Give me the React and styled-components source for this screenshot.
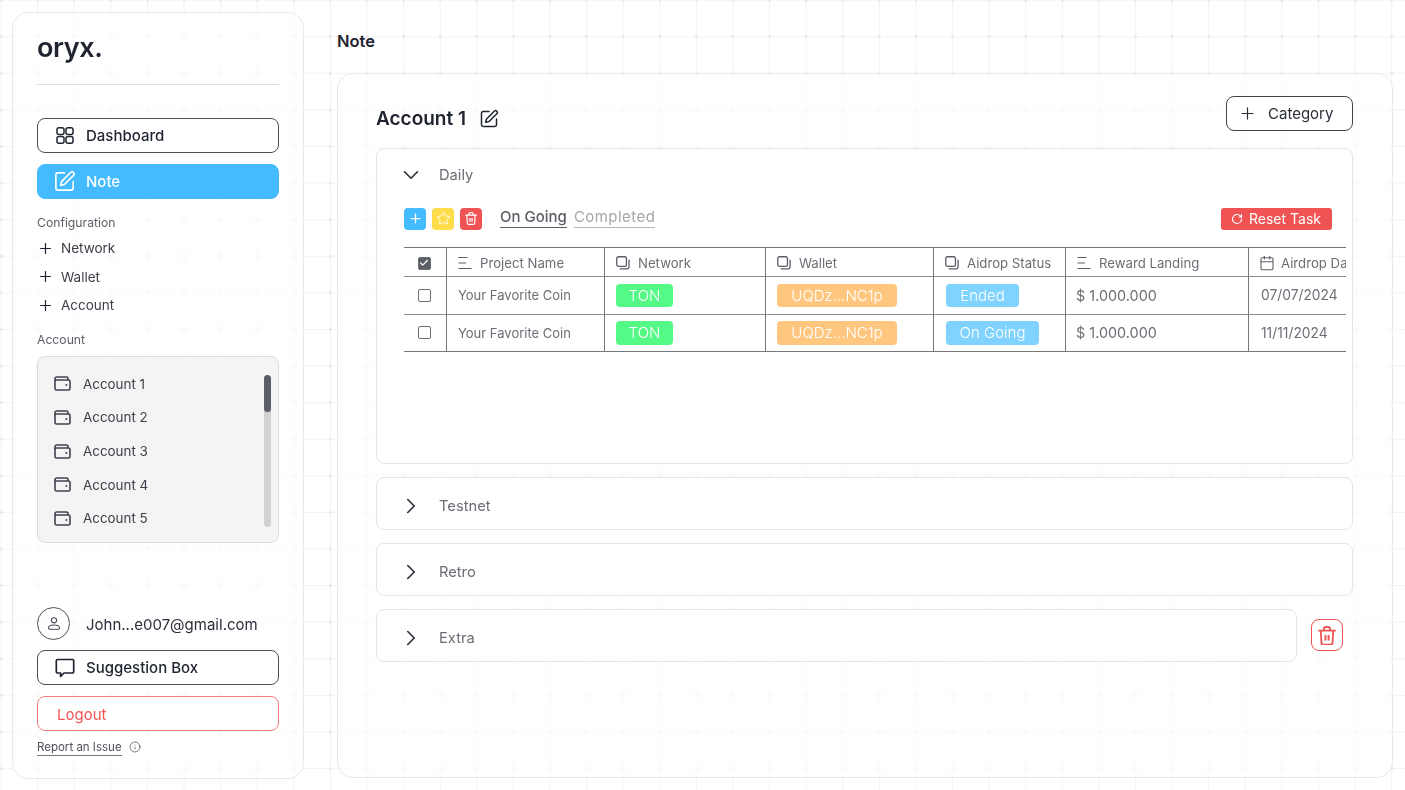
import React from 'react';
import styled, { createGlobalStyle } from 'styled-components';
import { ChevronDown, ChevronRight, Plus, Star, RotateCw, SquarePen, Info, Calendar, Check } from 'lucide-react';

const GlobalStyle = createGlobalStyle`
  html, body {
    margin: 0;
    height: 100%;
    overflow: hidden;
    background-color: #fff;
    background-image:
      radial-gradient(circle, #e6e6e8 1px, transparent 1.8px),
      linear-gradient(to right, #f3f3f4 1px, transparent 1px),
      linear-gradient(to bottom, #f3f3f4 1px, transparent 1px);
    background-size: 36.6px 36.6px;
    background-position: -17.2px -18.2px, 0.6px -0.4px, 0.6px -0.4px;
    font-family: Inter, "Liberation Sans", sans-serif;
    color: #1f2430;
  }
  * { box-sizing: border-box; }
`;

const Page = styled.div`
  width: 1405px;
  height: 790px;
  padding: 12px;
  display: flex;
  gap: 33px;
`;

const Sidebar = styled.aside`
  width: 292px;
  height: 767px;
  flex: none;
  padding: 20px 24px 0 24px;
  border: 1px solid #e9e9ea;
  border-radius: 16px;
  background: rgba(255, 255, 255, 0.55);
  backdrop-filter: blur(1px);
  display: flex;
  flex-direction: column;
`;

const Logo = styled.div`
  font-size: 27px;
  font-weight: 600;
  line-height: 30px;
  letter-spacing: -0.4px;
  height: 52px;
  color: #1f2430;
  border-bottom: 1px solid #dedede;
`;

const NavButton = styled.button`
  width: 242px;
  height: 35px;
  flex: none;
  display: flex;
  align-items: center;
  gap: 12px;
  padding: ${p => p.$lower || 0}px 0 0 ${p => (p.$danger ? 19 : 17)}px;
  margin-top: ${p => p.$top || 0}px;
  border-radius: 8px;
  border: 1px solid ${p => (p.$active ? '#45bbff' : p.$danger ? '#f77b7b' : '#4a4e58')};
  background: ${p => (p.$active ? '#45bbff' : '#fff')};
  color: ${p => (p.$active ? '#fff' : p.$danger ? '#f25555' : '#1f2430')};
  font-family: inherit;
  font-size: 15px;
  font-weight: ${p => (p.$danger ? 400 : 500)};
  text-align: left;
`;

const NavIcon = styled.span`
  width: 19px;
  height: 20px;
  flex: none;
  display: flex;
  align-items: center;
  justify-content: center;

  svg {
    flex: none;
  }
`;

const SectionLabel = styled.div`
  font-size: 12.2px;
  line-height: 16px;
  color: #5d6068;
  margin-top: ${p => p.$top}px;
`;

const ConfigList = styled.div`
  margin-top: 3px;
`;

const ConfigRow = styled.div`
  height: 28.6px;
  display: flex;
  align-items: center;
  gap: 7px;
  font-size: 13.5px;
  color: #3b3f49;

  svg {
    color: #1f2430;
  }
`;

const AccountBox = styled.div`
  position: relative;
  margin-top: 8px;
  height: 187px;
  flex: none;
  border: 1px solid #dcdcdc;
  border-radius: 8px;
  background: #f4f4f4;
  padding: 10px 0 0 16px;
`;

const AccountRow = styled.div`
  height: 33.7px;
  display: flex;
  align-items: center;
  gap: 12px;
  font-size: 13.4px;
  color: #3b3f49;
`;

const ScrollTrack = styled.div`
  position: absolute;
  top: 18px;
  right: 7px;
  width: 7px;
  height: 152px;
  border-radius: 4px;
  background: #d2d2d3;
`;

const ScrollThumb = styled.div`
  width: 7px;
  height: 37px;
  border-radius: 4px;
  background: #5b5e66;
`;

const UserRow = styled.div`
  margin-top: 64px;
  height: 33px;
  display: flex;
  align-items: center;
  gap: 16px;
  font-size: 15px;
  color: #2a2e38;
`;

const UserEmail = styled.span`
  margin-top: 2px;
`;

const Avatar = styled.div`
  width: 33px;
  height: 33px;
  border: 1px solid #4a4e58;
  border-radius: 50%;
  display: flex;
  align-items: center;
  justify-content: center;
  color: #4a4e58;
`;

const ReportRow = styled.div`
  margin-top: 8px;
  display: flex;
  align-items: center;
  gap: 7px;
  font-size: 11.5px;
  color: #4d5059;
  line-height: 16px;
`;

const ReportLink = styled.span`
  border-bottom: 1px solid #777;
`;

const Main = styled.main`
  flex: 1;
  min-width: 0;
  display: flex;
  flex-direction: column;
`;

const PageTitle = styled.h1`
  margin: 0;
  height: 61px;
  padding-top: 19px;
  font-size: 16.5px;
  line-height: 20px;
  font-weight: 600;
  color: #1f2430;
`;

const MainCard = styled.section`
  width: 1056px;
  height: 706px;
  border: 1px solid #e9e9ea;
  border-radius: 16px;
  background: rgba(255, 255, 255, 0.55);
  backdrop-filter: blur(1px);
  padding: 22px 39px 0 38px;
`;

const CardHeader = styled.div`
  height: 52px;
  display: flex;
  align-items: flex-start;
  justify-content: space-between;
`;

const AccountTitle = styled.div`
  display: flex;
  align-items: center;
  gap: 13px;
  margin-top: 11px;
  font-size: 19px;
  line-height: 24px;
  font-weight: 600;
  color: #1f2430;
`;

const CategoryButton = styled.button`
  width: 127px;
  height: 35px;
  display: flex;
  align-items: center;
  gap: 11px;
  padding: 0 0 0 11px;
  border: 1px solid #3e424c;
  border-radius: 8px;
  background: #fff;
  color: #2a2e38;
  font-family: inherit;
  font-size: 15px;
`;

const Panels = styled.div`
  display: flex;
  flex-direction: column;
  gap: 13px;
`;

const PanelRow = styled.div`
  display: flex;
  align-items: center;
  gap: 14px;
`;

const Panel = styled.div`
  flex: 1;
  min-width: 0;
  height: ${p => p.$height}px;
  border: 1px solid #e4e4e5;
  border-radius: 8px;
  background: #fff;
`;

const PanelHead = styled.div`
  height: ${p => (p.$open ? 52 : 56)}px;
  display: flex;
  align-items: center;
  gap: 15px;
  padding-left: 21px;
  font-size: 14.7px;
  color: #6b6e75;

  svg {
    color: #2a2e38;
  }
`;

const Toolbar = styled.div`
  height: 22px;
  margin: 7px 20px 0 27px;
  display: flex;
  align-items: center;
  gap: 6px;
`;

const SquareButton = styled.div`
  width: 22px;
  height: 22px;
  border-radius: 4px;
  background: ${p => p.$bg};
  display: flex;
  align-items: center;
  justify-content: center;
  color: #fff;
`;

const Tabs = styled.div`
  display: flex;
  gap: 7px;
  margin: -2px 0 0 12px;
`;

const Tab = styled.div`
  font-size: 15px;
  line-height: 18px;
  height: 20px;
  font-weight: ${p => (p.$active ? 500 : 400)};
  letter-spacing: ${p => (p.$active ? 0 : 0.45)}px;
  color: ${p => (p.$active ? '#5b5e66' : '#a5a6aa')};
  border-bottom: 1px solid ${p => (p.$active ? '#5b5e66' : '#b5b6b8')};
`;

const ResetButton = styled.div`
  margin-left: auto;
  width: 111px;
  height: 22px;
  border-radius: 3px;
  background: #f05353;
  color: #fff;
  display: flex;
  align-items: center;
  justify-content: center;
  gap: 6px;
  font-size: 14px;
  padding-right: 1px;
`;

const TableWrap = styled.div`
  margin: 17px 6px 0 27px;
  overflow: hidden;
`;

const Table = styled.div`
  width: 1000px;
  display: grid;
  grid-template-columns: 43px 158px 161px 168px 132px 183px 155px;
  border-top: 1px solid #777;
  border-bottom: 1px solid #777;
`;

const HeadCell = styled.div`
  height: 29px;
  display: flex;
  align-items: center;
  gap: 8px;
  padding: 3px 0 0 11px;
  font-size: 13.2px;
  white-space: nowrap;
  color: #6b6e75;
  border-right: ${p => (p.$last ? 0 : '1px solid #777')};
  border-bottom: 1px solid #8a8a8a;

  svg {
    flex: none;
    color: #5b5e66;
    margin-top: -1px;
  }
`;

const Cell = styled.div`
  height: ${p => p.$height}px;
  display: flex;
  align-items: center;
  padding-left: ${p => p.$pad ?? 11}px;
  font-size: ${p => p.$size ?? 13}px;
  white-space: nowrap;
  color: #6b6e75;
  border-right: ${p => (p.$last ? 0 : '1px solid #777')};
  border-bottom: ${p => (p.$end ? 0 : '1px solid #8a8a8a')};
`;

const CheckCell = styled(Cell)`
  justify-content: center;
  padding: 0 2px 0 0;
`;

const HeadCheckCell = styled(HeadCell)`
  justify-content: center;
  padding: 3px 2px 0 0;
`;

const Checkbox = styled.span`
  width: 13px;
  height: 13px;
  border-radius: 2px;
  border: 1.5px solid #6b6e75;
  background: ${p => (p.$on ? '#5b5e66' : 'transparent')};
  display: flex;
  align-items: center;
  justify-content: center;
  color: #fff;

  svg {
    color: #fff;
    margin-top: 0;
  }
`;

const Badge = styled.span`
  height: 23.5px;
  width: ${p => p.$width}px;
  border-radius: 4px;
  background: ${p => p.$bg};
  color: #fff;
  font-size: 15px;
  font-weight: 300;
  display: flex;
  align-items: center;
  justify-content: center;
`;

const OutlineTrash = styled.div`
  width: 32px;
  height: 32px;
  flex: none;
  margin-right: 10px;
  border: 1.5px solid #f05353;
  border-radius: 8px;
  color: #f05353;
  display: flex;
  align-items: center;
  justify-content: center;
`;

// icons lucide has no close match for
const GridIcon = () => (
  <svg width="18" height="17" viewBox="0 0 18 17" fill="none" stroke="currentColor" strokeWidth="1.5">
    <rect x="1" y="0.8" width="7" height="6.6" rx="2" />
    <rect x="10" y="0.8" width="7" height="6.6" rx="2" />
    <rect x="1" y="9.6" width="7" height="6.6" rx="2" />
    <rect x="10" y="9.6" width="7" height="6.6" rx="2" />
  </svg>
);

const WalletIcon = () => (
  <svg width="17" height="15" viewBox="0 0 17 15" fill="none" stroke="#3f434d" strokeWidth="1.6" style={{ flex: 'none' }}>
    <path d="M1 5V3a2 2 0 0 1 2-2h9.5A1.5 1.5 0 0 1 14 2.5V4" />
    <rect x="1" y="4" width="15" height="10" rx="1.6" />
    <circle cx="12.4" cy="9" r="1" fill="#3f434d" stroke="none" />
  </svg>
);

const ChatIcon = () => (
  <svg width="20" height="20" viewBox="0 0 20 20" fill="none" stroke="currentColor" strokeWidth="1.7" strokeLinejoin="round">
    <path d="M2.5 1.5h15a1.2 1.2 0 0 1 1.2 1.2v11.1a1.2 1.2 0 0 1-1.2 1.2H9l-3.4 3.4v-3.4H2.5a1.2 1.2 0 0 1-1.2-1.2V2.7a1.2 1.2 0 0 1 1.2-1.2z" />
  </svg>
);

const UserIcon = () => (
  <svg width="14" height="13" viewBox="0 0 14 13" fill="none" stroke="currentColor" strokeWidth="1.1">
    <circle cx="7" cy="3.3" r="2.6" />
    <path d="M2.8 12.2h8.4a1.3 1.3 0 0 0 1.3-1.4c-.2-1.7-2.3-2.8-5.5-2.8s-5.3 1.1-5.5 2.8a1.3 1.3 0 0 0 1.3 1.4z" />
  </svg>
);

const TrashIcon = ({ size }) => (
  <svg width={size} height={size * 1.1} viewBox="0 0 18 20" fill="none" stroke="currentColor" strokeWidth="1.8">
    <path d="M0.8 4.6h16.4" strokeLinecap="round" />
    <path d="M5.8 4.6V3.2a2.2 2.2 0 0 1 2.2-2.2h2a2.2 2.2 0 0 1 2.2 2.2v1.4" />
    <path d="M2.7 4.6l.7 12.4a2 2 0 0 0 2 1.9h7.2a2 2 0 0 0 2-1.9l.7-12.4" />
    <path d="M7.4 9v5.6M10.6 9v5.6" strokeWidth="2" />
  </svg>
);

const AlignIcon = () => (
  <svg width="14" height="14" viewBox="0 0 14 14" fill="none" stroke="currentColor" strokeWidth="1.2">
    <path d="M0.5 1.5h9M0.5 7h7.5M0.5 12.5h13" />
  </svg>
);

const CopyIcon = () => (
  <svg width="14" height="14" viewBox="0 0 15 15" fill="none" stroke="currentColor" strokeWidth="1.4">
    <rect x="0.8" y="0.8" width="10.4" height="10.4" rx="2" />
    <path d="M14 4v7.2a2.6 2.6 0 0 1-2.6 2.6H4" />
  </svg>
);

const CalendarIcon = () => <Calendar size={16} strokeWidth={1.6} style={{ marginRight: -2, marginLeft: -1 }} />;

const ACCOUNTS = ['Account 1', 'Account 2', 'Account 3', 'Account 4', 'Account 5'];

const ROWS = [
  { status: 'Ended', statusWidth: 73, date: '07/07/2024', height: 38 },
  { status: 'On Going', statusWidth: 93, date: '11/11/2024', height: 36, end: true },
];

const HEADERS = [
  { Icon: AlignIcon, label: 'Project Name' },
  { Icon: CopyIcon, label: 'Network' },
  { Icon: CopyIcon, label: 'Wallet' },
  { Icon: CopyIcon, label: 'Aidrop Status' },
  { Icon: AlignIcon, label: 'Reward Landing' },
  { Icon: CalendarIcon, label: 'Airdrop Date', last: true },
];

const CLOSED_PANELS = ['Testnet', 'Retro'];

export default function App() {
  return (
    <Page>
      <GlobalStyle />
      <Sidebar>
        <Logo>oryx.</Logo>
        <NavButton $top={33}><NavIcon><GridIcon /></NavIcon>Dashboard</NavButton>
        <NavButton $top={11} $active><NavIcon><SquarePen size={23} strokeWidth={1.7} /></NavIcon>Note</NavButton>
        <SectionLabel $top={16}>Configuration</SectionLabel>
        <ConfigList>
          <ConfigRow><Plus size={17} strokeWidth={1.7} />Network</ConfigRow>
          <ConfigRow><Plus size={17} strokeWidth={1.7} />Wallet</ConfigRow>
          <ConfigRow><Plus size={17} strokeWidth={1.7} />Account</ConfigRow>
        </ConfigList>
        <SectionLabel $top={12}>Account</SectionLabel>
        <AccountBox>
          {ACCOUNTS.map(name => (
            <AccountRow key={name}><WalletIcon />{name}</AccountRow>
          ))}
          <ScrollTrack><ScrollThumb /></ScrollTrack>
        </AccountBox>
        <UserRow>
          <Avatar><UserIcon /></Avatar>
          <UserEmail>John...e007@gmail.com</UserEmail>
        </UserRow>
        <NavButton $top={10} $lower={1}><NavIcon><ChatIcon /></NavIcon>Suggestion Box</NavButton>
        <NavButton $top={11} $lower={2} $danger>Logout</NavButton>
        <ReportRow><ReportLink>Report an Issue</ReportLink><Info size={12} strokeWidth={1.5} /></ReportRow>
      </Sidebar>
      <Main>
        <PageTitle>Note</PageTitle>
        <MainCard>
          <CardHeader>
            <AccountTitle>Account 1 <SquarePen size={20} strokeWidth={1.8} /></AccountTitle>
            <CategoryButton><Plus size={19} strokeWidth={1.5} />Category</CategoryButton>
          </CardHeader>
          <Panels>
            <PanelRow>
              <Panel $height={316}>
                <PanelHead $open><ChevronDown size={26} strokeWidth={1.5} />Daily</PanelHead>
                <Toolbar>
                  <SquareButton $bg="#45bbff"><Plus size={15} strokeWidth={2} /></SquareButton>
                  <SquareButton $bg="#ffdd4a"><Star size={15} strokeWidth={1.4} /></SquareButton>
                  <SquareButton $bg="#f05353"><TrashIcon size={12} /></SquareButton>
                  <Tabs>
                    <Tab $active>On Going</Tab>
                    <Tab>Completed</Tab>
                  </Tabs>
                  <ResetButton><RotateCw size={12} strokeWidth={2.4} />Reset Task</ResetButton>
                </Toolbar>
                <TableWrap>
                  <Table>
                    <HeadCheckCell><Checkbox $on><Check size={10} strokeWidth={3} /></Checkbox></HeadCheckCell>
                    {HEADERS.map(({ Icon, label, last }) => (
                      <HeadCell key={label} $last={last}><Icon />{label}</HeadCell>
                    ))}
                    {ROWS.map(row => (
                      <React.Fragment key={row.date}>
                        <CheckCell $height={row.height} $end={row.end}><Checkbox /></CheckCell>
                        <Cell $height={row.height} $end={row.end}>Your Favorite Coin</Cell>
                        <Cell $height={row.height} $end={row.end}><Badge $bg="#55f986" $width={57}>TON</Badge></Cell>
                        <Cell $height={row.height} $end={row.end}><Badge $bg="#ffc680" $width={120}>UQDz...NC1p</Badge></Cell>
                        <Cell $height={row.height} $end={row.end} $pad={12}><Badge $bg="#80d2ff" $width={row.statusWidth}>{row.status}</Badge></Cell>
                        <Cell $height={row.height} $end={row.end} $pad={10} $size={14.4}>$ 1.000.000</Cell>
                        <Cell $height={row.height} $end={row.end} $pad={12} $size={13.8} $last>{row.date}</Cell>
                      </React.Fragment>
                    ))}
                  </Table>
                </TableWrap>
              </Panel>
            </PanelRow>
            {CLOSED_PANELS.map(name => (
              <PanelRow key={name}>
                <Panel $height={53}><PanelHead><ChevronRight size={26} strokeWidth={1.5} />{name}</PanelHead></Panel>
              </PanelRow>
            ))}
            <PanelRow>
              <Panel $height={53}><PanelHead><ChevronRight size={26} strokeWidth={1.5} />Extra</PanelHead></Panel>
              <OutlineTrash><TrashIcon size={18} /></OutlineTrash>
            </PanelRow>
          </Panels>
        </MainCard>
      </Main>
    </Page>
  );
}
